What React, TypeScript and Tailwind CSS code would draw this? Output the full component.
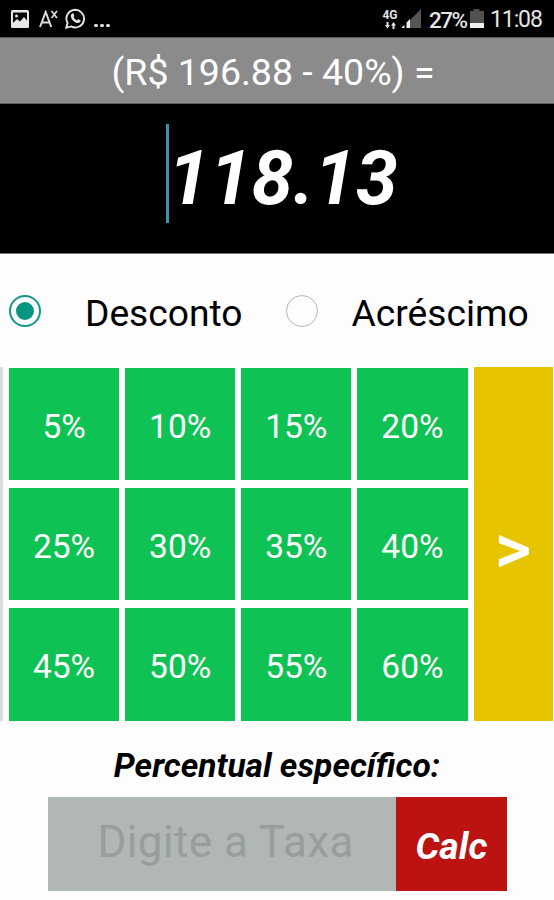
import { useState } from 'react';

type Mode = 'desconto' | 'acrescimo';

const RATES = [5, 10, 15, 20, 25, 30, 35, 40, 45, 50, 55, 60];

function StatusBar() {
  return (
    <div className="flex h-[37px] shrink-0 items-center justify-between bg-black pl-[11px] pr-[12px] text-[#e4e4e4]">
      <div className="flex items-center">
        {/* Picture notification */}
        <svg className="h-[18px] w-[18px]" viewBox="0 0 18 18">
          <rect width="18" height="18" rx="1.5" fill="#e8e8e8" />
          <path d="M2 2.5h14v8l-3-3.5-4 4.5-3-2.5-4 4z" fill="#050505" />
          <circle cx="5.5" cy="6" r="1.5" fill="#e8e8e8" />
        </svg>
        {/* Font size notification */}
        <svg className="ml-[10px] h-[18px] w-[19px]" viewBox="0 0 19 18" fill="none" stroke="#dcdcdc">
          <path d="M1 17 6.7 2l5.5 15M3 12.4h7.5" strokeWidth="2" />
          <path d="m12.5 1 5.5 7M18 1l-5.5 7" strokeWidth="1.7" />
        </svg>
        {/* WhatsApp */}
        <svg className="ml-[7px] h-[21px] w-[21px]" viewBox="0 0 21 21" fill="none">
          <path d="M1.2 19.7 2.6 15a8.8 8.8 0 1 1 3.5 3.4z" stroke="#e4e4e4" strokeWidth="1.9" />
          <path
            d="M7.3 5.6c.4-.4 1-.3 1.2.2l.8 1.9c.1.4-.5 1-.8 1.4.8 1.5 1.9 2.6 3.5 3.3.5-.5 1-1.3 1.4-1.1l1.9 1c.5.3.2 1.3-.2 1.8-1.4 1.6-3.8.9-5.8-.4C7 12.1 5.6 9.5 5.9 7.5c.1-.8.7-1.4 1.4-1.9z"
            fill="#e4e4e4"
          />
        </svg>
        <div className="mt-[14px] ml-[8px] flex gap-[2.5px]">
          <span className="h-[3.5px] w-[3.5px] rounded-full bg-[#e4e4e4]" />
          <span className="h-[3.5px] w-[3.5px] rounded-full bg-[#e4e4e4]" />
          <span className="h-[3.5px] w-[3.5px] rounded-full bg-[#e4e4e4]" />
        </div>
      </div>

      <div className="flex items-center">
        <div className="mt-px flex w-[16px] flex-col items-center">
          <span className="text-[12px] font-bold leading-[11px]">4G</span>
          <svg className="mt-px h-[7px] w-[11px]" viewBox="0 0 11 7" fill="#e4e4e4">
            <path d="M1.5 0h2v3H5L2.5 6.5 0 3h1.5zM7.5 7h2V3.5H11L8.5 0 6 3.5h1.5z" />
          </svg>
        </div>
        <svg className="ml-[4px] h-[19px] w-[19px]" viewBox="0 0 19 19">
          <path d="M19 0v19H8V11z" fill="#555" />
          <path d="M0 19v-1l2.5-2v3zM4.5 19v-5.5L8 10v9z" fill="#f0f0f0" />
        </svg>
        <span className="ml-[8px] mt-[3px] w-[38px] whitespace-nowrap text-[22.5px] font-medium leading-[24px] tracking-[-1.5px]">27%</span>
        <svg className="ml-[3px] h-[19px] w-[14px]" viewBox="0 0 14 19">
          <path d="M0 2h3.5V0h6v2H14v12H0z" fill="#505050" />
          <path d="M0 14h14v5H0z" fill="#f0f0f0" />
        </svg>
        <span className="ml-[6px] mt-[3px] w-[52px] whitespace-nowrap text-[23px] leading-[24px] tracking-[-1.1px]">11:08</span>
      </div>
    </div>
  );
}

interface ModeOptionProps {
  label: string;
  checked: boolean;
  labelClass: string;
  onSelect: () => void;
}

function ModeOption({ label, checked, labelClass, onSelect }: ModeOptionProps) {
  return (
    <button onClick={onSelect} className="flex items-center">
      <span
        className={`flex h-[32px] w-[32px] items-center justify-center rounded-full ${
          checked ? 'border-2 border-[#159588]' : 'border-[1.5px] border-[#b4b9b9]'
        }`}
      >
        {checked && <span className="h-[18px] w-[18px] rounded-full bg-[#079681]" />}
      </span>
      <span className={`mt-[4px] whitespace-nowrap text-[37.2px] leading-[42px] ${labelClass}`}>{label}</span>
    </button>
  );
}

export default function App() {
  const [mode, setMode] = useState<Mode>('desconto');
  const [rate, setRate] = useState('');

  return (
    <div className="flex h-[900px] w-[554px] flex-col overflow-hidden bg-[#fdfdfd] font-['Roboto',sans-serif] text-black">
      <StatusBar />

      {/* Expression and result */}
      <div className="flex h-[67px] shrink-0 items-center justify-center border-y border-[#5c5c5c] bg-[#8b8b8b] pr-[8px] pt-[3px] text-[37.5px] text-white">
        <span className="whitespace-nowrap">(R$ 196.88 - 40%) =</span>
      </div>
      <div className="flex h-[150px] shrink-0 border-b border-[#777] bg-black pl-[166px] pt-[20px]">
        <span className="h-[99px] w-[3px] bg-[#468eaf]" />
        <span className="mt-[2px] ml-[-1px] whitespace-nowrap text-[75px] font-bold italic leading-[104px] text-white">118.13</span>
      </div>

      <div className="flex h-[113px] shrink-0 items-center gap-[43px] pl-[9px]">
        <ModeOption label="Desconto" checked={mode === 'desconto'} labelClass="ml-[44px]" onSelect={() => setMode('desconto')} />
        <ModeOption label="Acréscimo" checked={mode === 'acrescimo'} labelClass="ml-[34px]" onSelect={() => setMode('acrescimo')} />
      </div>

      {/* Preset rates */}
      <div className="flex h-[354px] shrink-0 gap-[6px] pr-[1.5px]">
        <span className="w-[3px] bg-[#dcdcdc]" />
        <div className="grid h-[353.5px] w-[458.5px] grid-cols-4 grid-rows-3 gap-x-[6px] gap-y-[8px] pt-[0.5px]">
          {RATES.map((value) => (
            <button
              key={value}
              onClick={() => setRate(String(value))}
              className="bg-[#0ec254] pt-[6px] text-[33.5px] text-white"
            >
              {value}%
            </button>
          ))}
        </div>
        <button className="flex flex-1 items-center justify-center bg-[#e6c500] pt-[10px] text-[71px] font-medium text-white">
          &gt;
        </button>
      </div>

      {/* Custom rate */}
      <div className="flex h-[76px] shrink-0 items-center justify-center pt-[15px] text-[33.5px] font-bold italic">
        <span className="whitespace-nowrap">Percentual específico:</span>
      </div>
      <div className="ml-[47.5px] flex h-[94px] w-[459.5px]">
        <input
          value={rate}
          onChange={(e) => setRate(e.target.value)}
          placeholder="Digite a Taxa"
          className="w-[348.5px] bg-[#b0b7b5] pb-[5px] pl-[50px] text-[44px] tracking-[0.4px] outline-none placeholder:text-[#999e9c]"
        />
        <button className="flex-1 bg-[#bd1212] pt-[5px] text-[37.5px] font-bold italic text-white">Calc</button>
      </div>
    </div>
  );
}
